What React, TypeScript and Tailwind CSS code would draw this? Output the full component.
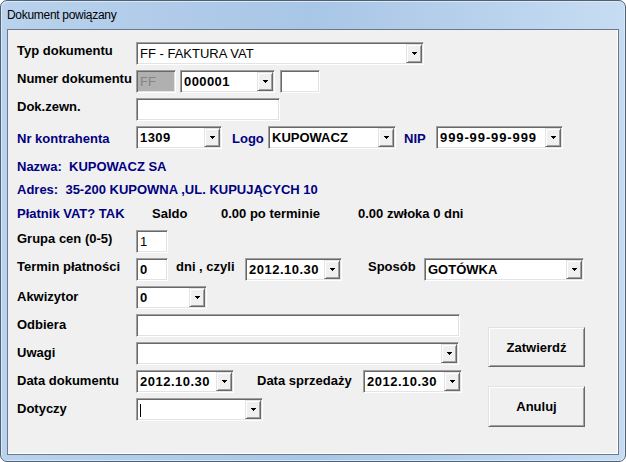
import React from "react";

const sunken =
  "border border-t-[#a0a0a0] border-l-[#a0a0a0] border-r-white border-b-white shadow-[inset_1px_1px_0_#696969,inset_-1px_-1px_0_#e3e3e3]";
const raised =
  "border border-t-[#e3e3e3] border-l-[#e3e3e3] border-r-[#696969] border-b-[#696969] shadow-[inset_1px_1px_0_#ffffff,inset_-1px_-1px_0_#a0a0a0]";

function Arrow() {
  return (
    <svg width="5" height="3" viewBox="0 0 5 3" shapeRendering="crispEdges">
      <path d="M0 0h5v1H0zM1 1h3v1H1zM2 2h1v1H2z" fill="#000" />
    </svg>
  );
}

function Combo({
  className,
  value,
  valueClass = "",
  caret = false,
}: {
  className: string;
  value?: string;
  valueClass?: string;
  caret?: boolean;
}) {
  return (
    <div className={`${className} h-[23px] flex bg-white ${sunken} p-[1px]`}>
      <div className="flex-1 flex items-center pl-[2px] overflow-hidden whitespace-nowrap">
        {caret && <span className="w-[1px] h-[13px] bg-black mt-[1px]" />}
        {value && <span className={`text-[13px] leading-[15px] text-black ${valueClass}`}>{value}</span>}
      </div>
      <div className={`w-[16px] h-full bg-[#f0f0f0] ${raised} flex items-center justify-center`}>
        <Arrow />
      </div>
    </div>
  );
}

function TextBox({
  className,
  value,
  valueClass = "",
  disabled = false,
}: {
  className: string;
  value?: string;
  valueClass?: string;
  disabled?: boolean;
}) {
  return (
    <div
      className={`${className} h-[23px] flex items-center pl-[3px] ${sunken} ${
        disabled ? "bg-[#b0b0b0]" : "bg-white"
      }`}
    >
      {value && (
        <span className={`text-[13px] leading-[15px] whitespace-nowrap ${disabled ? "text-[#848484]" : "text-black"} ${valueClass}`}>
          {value}
        </span>
      )}
    </div>
  );
}

function Label({ text, className = "" }: { text: string; className?: string }) {
  return (
    <span className={`w-[119px] shrink-0 text-[13px] leading-[15px] font-bold text-black whitespace-nowrap ${className}`}>
      {text}
    </span>
  );
}

function Button({ text, className }: { text: string; className: string }) {
  return (
    <div
      className={`${className} w-[97px] bg-[#f0f0f0] ${raised} flex items-center justify-center text-[13px] leading-[15px] font-bold text-black`}
    >
      {text}
    </div>
  );
}

export default function App() {
  return (
    <div className="w-[626px] h-[462px] bg-white">
      <div className="w-[626px] h-[462px] rounded-[7px] border border-[#4f6073] bg-gradient-to-r from-[#b9d2ed] via-[#a8c6e6] to-[#c6dcf2] shadow-[inset_1px_1px_0_#dbe8f6,inset_-1px_-1px_0_#dbe8f6] flex flex-col px-[6px] pb-[6px] font-['Liberation_Sans',Arial,sans-serif]">
        <div className="h-[28px] shrink-0 pt-[7px] text-[12px] leading-[15px] tracking-[-0.3px] text-black">
          Dokument powiązany
        </div>
        <div className="flex-1 border border-[#6b7889] bg-[#f0f0f0] shadow-[inset_-1px_-1px_0_#ffffff]">
          <div className="pl-[9px] pt-[12px] flex flex-col">
            <div className="flex items-start h-[23px]">
              <Label text="Typ dokumentu" className="pt-[1px]" />
              <Combo className="w-[288px]" value="FF - FAKTURA VAT" />
            </div>
            <div className="flex items-start h-[23px] mt-[5px]">
              <Label text="Numer dokumentu" className="pt-[1px]" />
              <TextBox className="w-[40px]" value="FF" disabled />
              <Combo className="w-[95px] ml-[4px]" value="000001" valueClass="font-bold tracking-[0.4px]" />
              <TextBox className="w-[40px] ml-[5px]" />
            </div>
            <div className="flex items-start h-[23px] mt-[5px]">
              <Label text="Dok.zewn." className="pt-[1px]" />
              <TextBox className="w-[144px]" />
            </div>
            <div className="flex items-start h-[23px] mt-[5px] text-[13px] leading-[15px] font-bold text-[#000080]">
              <Label text="Nr kontrahenta" className="pt-[5px] !text-[#000080]" />
              <Combo className="w-[86px]" value="1309" valueClass="font-bold tracking-[0.4px]" />
              <span className="w-[36px] ml-[10px] pt-[5px]">Logo</span>
              <Combo className="w-[128px]" value="KUPOWACZ" />
              <span className="w-[32px] ml-[8px] pt-[5px]">NIP</span>
              <Combo className="w-[127px]" value="999-99-99-999" valueClass="font-bold tracking-[0.9px]" />
            </div>
            <div className="mt-[10px] h-[15px] text-[13px] leading-[15px] font-bold text-[#000080] whitespace-pre">
              {"Nazwa:  KUPOWACZ SA"}
            </div>
            <div className="mt-[8px] h-[15px] text-[13px] leading-[15px] font-bold text-[#000080] whitespace-pre">
              {"Adres:  35-200 KUPOWNA ,UL. KUPUJĄCYCH 10"}
            </div>
            <div className="mt-[9px] h-[15px] flex text-[13px] leading-[15px] font-bold whitespace-nowrap">
              <span className="w-[135px] text-[#000080]">Płatnik VAT? TAK</span>
              <span className="w-[69px] text-black">Saldo</span>
              <span className="w-[137px] text-black">0.00 po terminie</span>
              <span className="text-black">0.00 zwłoka 0 dni</span>
            </div>
            <div className="flex items-start h-[23px] mt-[9px]">
              <Label text="Grupa cen (0-5)" className="pt-[1px]" />
              <TextBox className="w-[32px]" value="1" />
            </div>
            <div className="flex items-start h-[23px] mt-[5px] text-[13px] leading-[15px] font-bold text-black">
              <Label text="Termin płatności" className="pt-[1px]" />
              <TextBox className="w-[32px]" value="0" valueClass="font-bold" />
              <span className="w-[69px] ml-[8px] pt-[1px] whitespace-nowrap">dni , czyli</span>
              <Combo className="w-[97px]" value="2012.10.30" valueClass="font-bold tracking-[0.5px]" />
              <span className="w-[56px] ml-[26px] pt-[1px]">Sposób</span>
              <Combo className="w-[160px]" value="GOTÓWKA" />
            </div>
            <div className="flex mt-[5px]">
              <div className="w-[445px] flex flex-col gap-[5px]">
                <div className="flex items-start h-[23px]">
                  <Label text="Akwizytor" className="pt-[3px]" />
                  <Combo className="w-[71px]" value="0" valueClass="font-bold" />
                </div>
                <div className="flex items-start h-[23px]">
                  <Label text="Odbiera" className="pt-[3px]" />
                  <TextBox className="w-[324px]" />
                </div>
                <div className="flex items-start h-[23px]">
                  <Label text="Uwagi" className="pt-[3px]" />
                  <Combo className="w-[323px]" />
                </div>
                <div className="flex items-start h-[23px] text-[13px] leading-[15px] font-bold text-black">
                  <Label text="Data dokumentu" className="pt-[3px]" />
                  <Combo className="w-[98px]" value="2012.10.30" valueClass="font-bold tracking-[0.5px]" />
                  <span className="w-[106px] ml-[23px] pt-[3px] whitespace-nowrap">Data sprzedaży</span>
                  <Combo className="w-[99px]" value="2012.10.30" valueClass="font-bold tracking-[0.5px]" />
                </div>
                <div className="flex items-start h-[23px]">
                  <Label text="Dotyczy" className="pt-[3px]" />
                  <Combo className="w-[127px]" caret />
                </div>
              </div>
              <div className="ml-[26px] flex flex-col">
                <Button text="Zatwierdź" className="mt-[41px] h-[40px]" />
                <Button text="Anuluj" className="mt-[19px] h-[41px]" />
              </div>
            </div>
          </div>
        </div>
      </div>
    </div>
  );
}
